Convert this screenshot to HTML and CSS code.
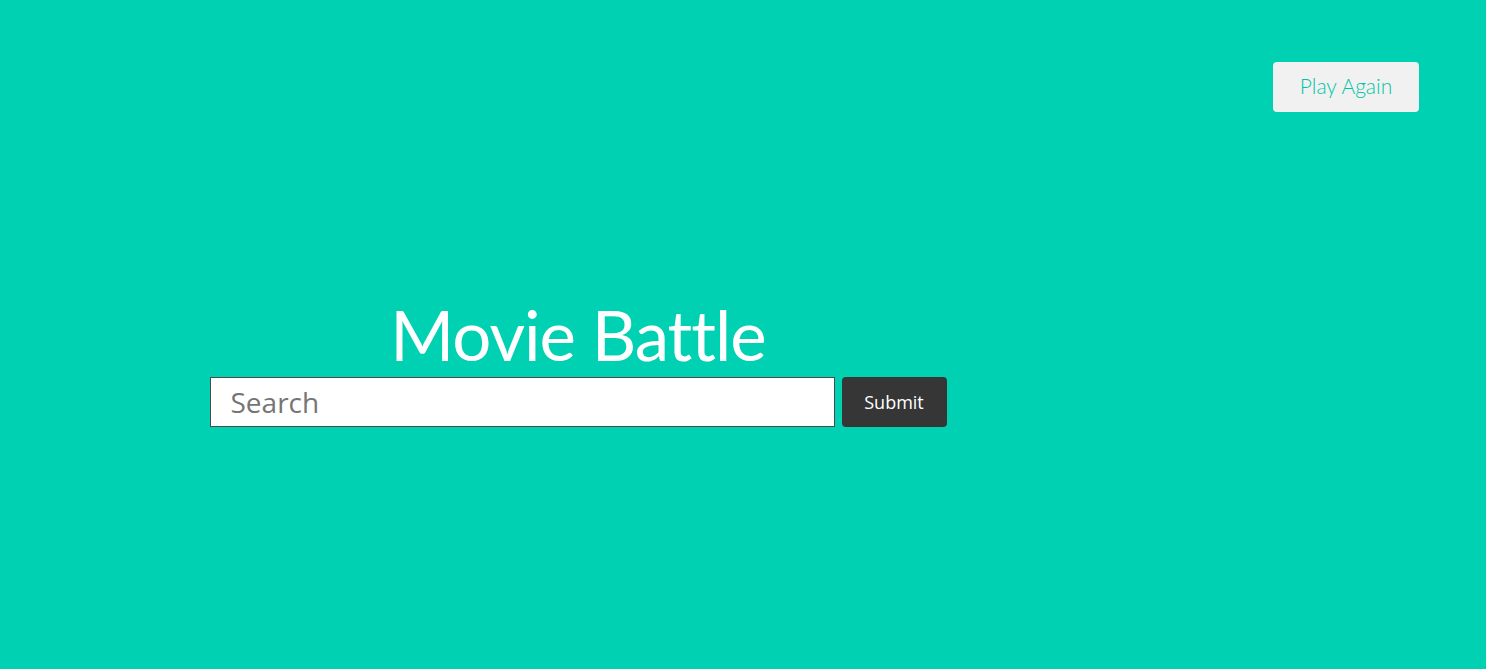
FILE: index.html
```html
<!DOCTYPE html>
<html>
<head>
<meta charset="utf-8">
<link rel="stylesheet" href="styles.css">
</head>
<body>
<div class="page">
  <header class="topbar">
    <button class="again">Play Again</button>
  </header>
  <main class="main">
    <h1 class="title">Movie Battle</h1>
    <form class="search-form">
      <input class="search" type="text" placeholder="Search">
      <button class="submit" type="button">Submit</button>
    </form>
  </main>
</div>
</body>
</html>
```

FILE: styles.css
```css
html, body {
  margin: 0;
  padding: 0;
  background: #00d1b2;
  height: 100%;
}
.page {
  min-height: 669px;
  display: flex;
  flex-direction: column;
  font-family: "Open Sans", "Noto Sans", sans-serif;
}
.topbar {
  display: flex;
  justify-content: flex-end;
  padding: 62px 67px 0 0;
}
.again {
  width: 146px;
  height: 50px;
  border: none;
  border-radius: 4px;
  background: #f1f1f1;
  color: #00c4a7;
  font-family: "Lato", sans-serif;
  font-weight: 300;
  font-size: 21px;
  line-height: 46px;
  padding: 0 0 2px;
  cursor: pointer;
}
.main {
  width: 1156px;
  display: flex;
  flex-direction: column;
  align-items: center;
  padding-top: 185px;
}
.title {
  margin: 0;
  color: #fff;
  font-family: "Lato", sans-serif;
  font-weight: 400;
  font-size: 69px;
  line-height: 76px;
  letter-spacing: -1px;
}
.search-form {
  display: flex;
  gap: 7px;
  margin-top: 4px;
}
.search {
  box-sizing: border-box;
  width: 625px;
  height: 50px;
  border: 1px solid #4a4a4a;
  border-radius: 0;
  padding: 0 20px;
  font-family: "Open Sans", sans-serif;
  font-size: 28px;
  color: #333;
  outline: none;
}
.search::placeholder {
  color: #757575;
}
.submit {
  width: 105px;
  height: 50px;
  border: none;
  border-radius: 4px;
  background: #363636;
  color: #fff;
  font-family: "Open Sans", sans-serif;
  font-size: 18px;
  padding: 0;
}
```
